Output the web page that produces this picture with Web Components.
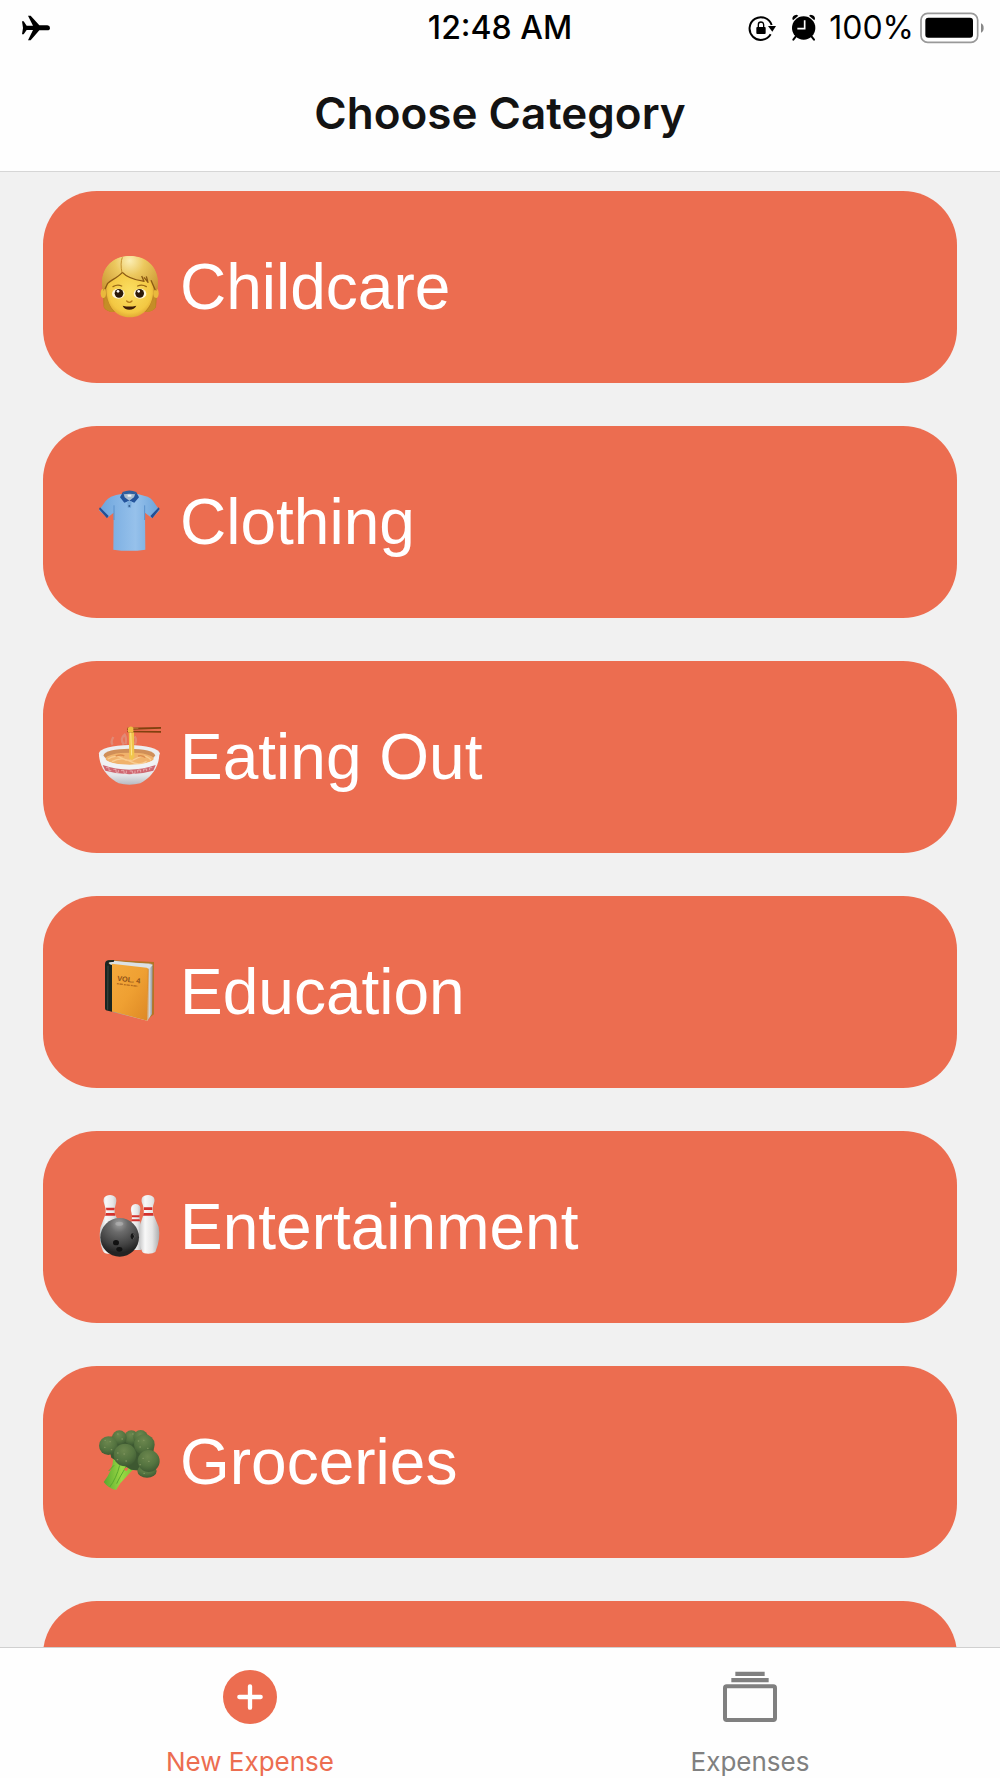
<!DOCTYPE html>
<html lang="en">
<head>
<meta charset="utf-8">
<meta name="viewport" content="width=device-width, initial-scale=1">
<title>Choose Category</title>
<style>
  :root {
    --accent: #ec6d50;
    --page: #f1f1f1;
    --bar: #fefefe;
    --ui-font: Inter, Roboto, sans-serif;
    --card-font: "Liberation Sans", Arial, sans-serif;
  }
  body {
    margin: 0;
    background: var(--page);
    font-family: var(--ui-font);
  }
</style>
</head>
<body>

<expense-app>
  <status-bar slot="top" time="12:48 AM" battery="100%"></status-bar>
  <nav-header slot="top">Choose Category</nav-header>

  <category-card icon="child">Childcare</category-card>
  <category-card icon="shirt">Clothing</category-card>
  <category-card icon="noodles">Eating Out</category-card>
  <category-card icon="book">Education</category-card>
  <category-card icon="bowling">Entertainment</category-card>
  <category-card icon="broccoli">Groceries</category-card>
  <category-card></category-card>

  <tab-bar slot="bottom">
    <tab-item icon="add" href="#new" active>New Expense</tab-item>
    <tab-item icon="stack" href="#expenses">Expenses</tab-item>
  </tab-bar>
</expense-app>

<script>
const categoryIcons = {
  child: `
    <svg viewBox="51 75 192 192" aria-hidden="true">
      <defs>
        <radialGradient id="hair" gradientUnits="userSpaceOnUse" cx="149" cy="92" r="150">
          <stop offset="0" stop-color="#fbeeb4"/><stop offset=".3" stop-color="#ecc85e"/><stop offset="1" stop-color="#b97c1c"/>
        </radialGradient>
        <radialGradient id="face" cx=".5" cy=".45" r=".6">
          <stop offset="0" stop-color="#fbdf62"/><stop offset=".75" stop-color="#f3c843"/><stop offset="1" stop-color="#d99d2c"/>
        </radialGradient>
      </defs>
      <path d="M149 78C103 78 67 108 66 158L71 232Q80 248 104 245L194 245Q218 247 228 232L234 160C234 108 198 78 149 78Z" fill="url(#hair)"/>
      <ellipse cx="70" cy="190" rx="8" ry="14" fill="#e9b93c"/>
      <ellipse cx="228" cy="190" rx="8" ry="14" fill="#e9b93c"/>
      <path d="M80 168C82 140 110 120 149 120S216 140 220 170C222 226 192 262 149 262S76 226 80 168Z" fill="url(#face)"/>
      <path d="M66 160C68 106 104 79 149 79S232 108 234 160L230 184C224 176 220 163 216 153L202 151L192 142L192 154C174 151 145 147 127 127C112 144 91 151 83 160C77 169 74 178 70 184Z" fill="url(#hair)"/>
      <path d="M74 202L83 212Q90 232 102 246Q82 247 72 232ZM226 202L216 212Q210 232 197 246Q218 247 227 232Z" fill="#c58d27"/>
      <path d="M127 127C112 144 91 151 83 160L75 177M127 127C145 147 174 151 192 154L185 138M192 142L204 157L199 139M213 151L226 181" fill="none" stroke="#8b5a14" stroke-width="4" stroke-linejoin="round"/>
      <path d="M127 82Q120 100 126 128" fill="none" stroke="#c2902e" stroke-width="3"/>
      <path d="M99 170Q112 162 125 168M173 168Q186 162 199 170" fill="none" stroke="#9c6a17" stroke-width="4" stroke-linecap="round"/>
      <ellipse cx="115" cy="191" rx="19" ry="15" fill="#fff7d9"/>
      <ellipse cx="180" cy="191" rx="19" ry="15" fill="#fff7d9"/>
      <circle cx="117" cy="190" r="13" fill="#2c1a0a"/><circle cx="179" cy="190" r="13" fill="#2c1a0a"/>
      <circle cx="114" cy="184" r="4" fill="#fff"/><circle cx="176" cy="184" r="4" fill="#fff"/>
      <path d="M140 213Q148 221 156 213" fill="none" stroke="#b57b19" stroke-width="4" stroke-linecap="round"/>
      <path d="M128 227Q148 232 169 227Q163 239 148 239T128 227Z" fill="#3e1c08"/>
    </svg>`,
  shirt: `
    <svg viewBox="51 60 192 192" aria-hidden="true">
      <defs>
        <linearGradient id="cloth">
          <stop offset="0" stop-color="#6aa3da"/><stop offset=".25" stop-color="#7fb1e3"/><stop offset=".6" stop-color="#96c1eb"/><stop offset="1" stop-color="#6aa3da"/>
        </linearGradient>
      </defs>
      <path d="M124 72Q108 74 93 80Q83 85 77 93L57 121L82 143L101 128L100 239Q148 246 196 239L195 128L216 145L239 121L219 93Q213 84 203 80L173 72Z" fill="url(#cloth)"/>
      <path d="M57 117L60 112L86 138L81 145ZM239 117L236 112L211 138L217 145Z" fill="#244f94"/>
      <path d="M102 106V150M194 106V150" stroke="#5a91cc" stroke-width="3"/>
      <path d="M129 68Q148 60 168 68L164 83L148 94L133 83Z" fill="#a9bccf"/>
      <path d="M143 74H154V80H143Z" fill="#eef3f6"/>
      <path d="M129 65L120 82L133 98L148 92L134 82ZM168 65L177 82L163 98L148 92L162 82Z" fill="#24549c"/>
      <path d="M128 66Q148 57 169 66L166 73Q148 69 131 73Z" fill="#2f5f9f"/>
      <path d="M142 94H155L153 114H143Z" fill="#78aadb"/>
      <circle cx="148" cy="108" r="3" fill="#365f92"/>
    </svg>`,
  noodles: `
    <svg viewBox="51 60 192 192" aria-hidden="true">
      <defs>
        <linearGradient id="bowl" x2="0" y2="1">
          <stop offset="0" stop-color="#f7f8f9"/><stop offset=".7" stop-color="#e5e6e9"/><stop offset="1" stop-color="#b8bac1"/>
        </linearGradient>
      </defs>
      <path d="M98 119Q91 111 100 96M131 119Q119 101 134 89Q140 99 137 117M164 117Q172 106 164 94" fill="none" stroke="#d8aaa0" stroke-width="7" opacity=".45"/>
      <path d="M57 143C57 184 78 214 116 235Q148 243 181 235C218 214 238 184 238 143Z" fill="url(#bowl)"/>
      <ellipse cx="148" cy="145" rx="91" ry="25" fill="#eceef0"/>
      <ellipse cx="148" cy="151" rx="77" ry="20" fill="#d08f58"/>
      <ellipse cx="149" cy="161" rx="72" ry="18" fill="#f0b26c"/>
      <path d="M84 162Q105 147 127 160T172 159T213 165M96 170Q124 154 151 169T200 169" fill="none" stroke="#f9cd92" stroke-width="4"/>
      <path d="M107 153Q124 147 133 153M174 153Q189 150 196 158" fill="none" stroke="#dd8c4c" stroke-width="4"/>
      <path d="M57 145C61 166 98 180 148 180S235 166 238 145C236 184 205 193 148 193S60 182 57 145Z" fill="#f1f2f4"/>
      <path d="M68 180Q148 208 227 180L220 197Q148 218 76 197Z" fill="#cf6670"/>
      <path d="M78 188H87V197H94M100 193H108V202H115V195M123 197H132V205H139V197M149 198H157V205H165V197M173 202V195H182V202M191 199V192H200V198M209 195V188H217" fill="none" stroke="#f0c6c5" stroke-width="2"/>
      <path d="M149 75L151 161M154 75L156 164M159 77L160 158" stroke="#f0c54c" stroke-width="6" fill="none"/>
      <path d="M152 79L155 151" stroke="#ffe58c" stroke-width="3"/>
      <path d="M142 68L244 66V71L142 75ZM142 77L244 78V83L142 82Z" fill="#80410f"/>
      <path d="M142 68H175V71H142Z" fill="#bd8138"/>
      <path d="M144 69Q151 60 160 68L160 82H144Z" fill="#eebd42"/>
    </svg>`,
  book: `
    <svg viewBox="51 60 192 192" aria-hidden="true">
      <defs>
        <linearGradient id="cover" x2="1" y2="1">
          <stop offset="0" stop-color="#f4aa3d"/><stop offset=".5" stop-color="#efa032"/><stop offset="1" stop-color="#dd8824"/>
        </linearGradient>
        <linearGradient id="pages">
          <stop offset="0" stop-color="#8e989d"/><stop offset=".9" stop-color="#e0e6e9"/><stop offset="1" stop-color="#8c8f93"/>
        </linearGradient>
      </defs>
      <path d="M84 62Q90 58 98 60L222 66V223L204 237L84 212Z" fill="#b47424"/>
      <path d="M95 64L214 71Q219 75 218 84L216 222L202 242L98 216Z" fill="url(#pages)"/>
      <path d="M84 64L101 62L219 74L207 87L91 75Z" fill="#dbe1e4"/>
      <path d="M95 71L200 83Q205 84 205 90L202 242L95 214Z" fill="url(#cover)"/>
      <path d="M84 61Q75 63 75 73V205Q75 212 84 212L96 215V75Q86 73 85 69Q88 65 101 66L103 60Z" fill="#182521"/>
      <path d="M84 77L83 209" stroke="#3c4841" stroke-width="3"/>
      <path d="M205 86L204 239" stroke="#c57920" stroke-width="2"/>
      <g transform="rotate(7 143 122)">
        <text x="111" y="126" font-family="Liberation Sans, sans-serif" font-size="22" font-weight="700" fill="#8e5118">VOL. 4</text>
        <path d="M112 135H176" stroke="#b46c20" stroke-width="4" stroke-dasharray="6 2 10 3"/>
      </g>
    </svg>`,
  bowling: `
    <svg viewBox="51 60 192 192" aria-hidden="true">
      <defs>
        <linearGradient id="pin">
          <stop offset="0" stop-color="#c2c2c3"/><stop offset=".3" stop-color="#f8f8f8"/><stop offset=".65" stop-color="#e5e5e5"/><stop offset="1" stop-color="#acacad"/>
        </linearGradient>
        <radialGradient id="ball" cx=".48" cy=".15" r=".75">
          <stop offset="0" stop-color="#a0a0a0"/><stop offset=".3" stop-color="#6b6b6b"/><stop offset=".75" stop-color="#414141"/><stop offset="1" stop-color="#232323"/>
        </radialGradient>
      </defs>
      <path d="M167 87C155 87 150 99 154 112Q158 122 155 138L143 180Q143 211 154 225H184Q192 180 180 138Q176 122 180 109C184 96 178 87 167 87Z" fill="url(#pin)"/>
      <path d="M156 121H179L178 127H156ZM155 133H179L180 139H154Z" fill="#d3312c"/>
      <path d="M90 60C74 60 68 71 72 84Q79 102 77 116L61 158Q55 194 69 229Q72 236 82 236H105L120 148L104 116Q102 103 108 84C112 71 106 60 90 60Z" fill="url(#pin)"/>
      <path d="M78 98H104L103 106H79ZM78 114H104L106 122H75Z" fill="#d3312c"/>
      <path d="M204 60C187 60 182 71 186 84Q193 98 191 117L178 156Q173 204 187 231Q191 236 205 236T226 231Q243 191 236 156L220 117Q216 99 222 84C227 71 220 60 204 60Z" fill="url(#pin)"/>
      <path d="M192 97H217V105H192ZM191 114H219L221 122H189Z" fill="#d3312c"/>
      <circle cx="119" cy="187" r="58" fill="url(#ball)"/>
      <ellipse cx="118" cy="146" rx="12" ry="6" fill="#bbb" opacity=".5"/>
      <ellipse cx="108" cy="203" rx="9" ry="8" fill="#111"/>
      <ellipse cx="118" cy="223" rx="9" ry="7" fill="#111"/>
      <ellipse cx="158" cy="184" rx="6" ry="9" fill="#171717"/>
      <path d="M160 176Q168 184 160 192" fill="none" stroke="#777" stroke-width="2"/>
    </svg>`,
  broccoli: `
    <svg viewBox="51 60 192 192" aria-hidden="true">
      <defs>
        <linearGradient id="stem">
          <stop offset="0" stop-color="#58a72f"/><stop offset=".5" stop-color="#9bd944"/><stop offset="1" stop-color="#68b62b"/>
        </linearGradient>
        <radialGradient id="floret" cx=".45" cy=".3" r=".7">
          <stop offset="0" stop-color="#6c874e"/><stop offset=".6" stop-color="#557440"/><stop offset="1" stop-color="#3f5b33"/>
        </radialGradient>
      </defs>
      <path d="M100 143Q99 180 71 216Q86 236 108 240L121 220L157 181L179 177L148 157Z" fill="url(#stem)"/>
      <path d="M119 166Q109 205 89 231M140 168Q119 201 110 221M86 183L102 166" fill="none" stroke="#5aa92e" stroke-width="3"/>
      <path d="M131 177L149 168L139 184Z" fill="var(--accent)"/>
      <path d="M79 82L180 70L221 119L211 185L153 179L94 143Z" fill="#3d5831"/>
      <g fill="url(#floret)">
        <circle cx="154" cy="83" r="22"/>
        <circle cx="182" cy="82" r="22"/>
        <circle cx="118" cy="83" r="22"/>
        <circle cx="85" cy="107" r="28"/>
        <circle cx="193" cy="104" r="31"/>
        <ellipse cx="201" cy="183" rx="29" ry="20"/>
        <circle cx="206" cy="153" r="33"/>
        <circle cx="135" cy="135" r="34"/>
      </g>
      <path d="M75 91h1m14 4h1m-17 17h1m19 7h1m18-47h1m12 15h1m31-15h1m16 21h1m15-2h1m-12 20h1m22 4h1m-91 14h1m18 3h1m-21 17h1m25 4h1m50-8h1m16 9h1m-27 10h1m11 26h1" fill="none" stroke="#80965f" stroke-width="4" stroke-linecap="round"/>
    </svg>`
};

const tabIcons = {
  add: `
    <svg viewBox="275 240 162 162" aria-hidden="true">
      <circle cx="356" cy="321" r="81" fill="currentColor"/>
      <path d="M356 289V353M324 321H388" stroke="#fff" stroke-width="13" stroke-linecap="round"/>
    </svg>`,
  stack: `
    <svg viewBox="221 120 162 162" aria-hidden="true">
      <path d="M258 125H346V138H258ZM246 144H358V157H246Z" fill="currentColor"/>
      <rect x="227" y="169" width="150" height="101" rx="5" fill="none" stroke="currentColor" stroke-width="12"/>
    </svg>`
};

class ExpenseApp extends HTMLElement {
  constructor() {
    super();
    this.attachShadow({ mode: 'open' });
    this.shadowRoot.innerHTML = `
      <style>
        :host {
          display: flex;
          flex-direction: column;
          height: 100vh;
        }
        header, footer {
          flex: none;
          background: var(--bar);
        }
        header {
          border-bottom: 1px solid #d6d6d6;
        }
        footer {
          border-top: 1px solid #d0d0d0;
        }
        main {
          flex: 1;
          min-height: 0;
          display: flex;
          flex-direction: column;
          gap: 43px;
          padding: 19px 43px;
          overflow-y: auto;
          scrollbar-width: none;
        }
      </style>
      <header><slot name="top"></slot></header>
      <main><slot></slot></main>
      <footer><slot name="bottom"></slot></footer>
    `;
  }
}
customElements.define('expense-app', ExpenseApp);

class StatusBar extends HTMLElement {
  constructor() {
    super();
    this.attachShadow({ mode: 'open' });
    this.shadowRoot.innerHTML = `
      <style>
        :host {
          display: grid;
          grid-template-columns: 1fr auto 1fr;
          align-items: center;
          padding: 0 16px;
          height: 55px;
          font-size: 32px;
          line-height: 40px;
          color: #000;
        }
        svg {
          display: block;
          flex: none;
        }
        .plane { margin-left: 5px; }
        .time {
          font-weight: 500;
        }
        .right {
          display: flex;
          align-items: center;
          justify-content: flex-end;
        }
        .lock { margin-right: 15px; }
        .alarm { margin-right: 12px; }
        .battery { margin-left: 6px; }
      </style>
      <svg class="plane" width="30" height="28" viewBox="62 40 90 84" role="img" aria-label="Airplane mode">
        <path d="M65 62H70L79 75H98L83 45H91L117 74H141Q149 75 149 82T141 89H117L91 119H83L98 88H79L70 101H65L68 82Z"/>
      </svg>
      <span class="time"></span>
      <div class="right">
        <svg class="lock" width="28" height="28" viewBox="57 40 84 84" role="img" aria-label="Rotation lock">
          <path d="M125 101A34 34 0 1 1 128 73" fill="none" stroke="#000" stroke-width="6"/>
          <path d="M117 76H141L130 93Z"/>
          <rect x="82" y="79" width="28" height="21" rx="3"/>
          <path d="M88 80V72Q88 64 96 64T104 72V80" fill="none" stroke="#000" stroke-width="4"/>
        </svg>
        <svg class="alarm" width="26" height="28" viewBox="187 38 78 84" role="img" aria-label="Alarm">
          <circle cx="225" cy="80" r="35"/>
          <path d="M191 52Q191 41 204 40L209 43L193 57ZM259 52Q259 41 246 40L241 43L257 57Z"/>
          <path d="M201 106L194 115M249 106L256 115" stroke="#000" stroke-width="6" stroke-linecap="round"/>
          <path d="M228 57V82H206" fill="none" stroke="#fff" stroke-width="5"/>
        </svg>
        <span class="level"></span>
        <svg class="battery" width="64" height="32" viewBox="574 31 192 96" aria-hidden="true">
          <rect x="577" y="35" width="170" height="87" rx="20" fill="none" stroke="#999" stroke-width="5"/>
          <rect x="590" y="48" width="143" height="60" rx="9"/>
          <path d="M757 65Q765 68 765 79T757 93Z" fill="#888"/>
        </svg>
      </div>
    `;
  }
  connectedCallback() {
    this.shadowRoot.querySelector('.time').textContent = this.getAttribute('time');
    this.shadowRoot.querySelector('.level').textContent = this.getAttribute('battery');
  }
}
customElements.define('status-bar', StatusBar);

class NavHeader extends HTMLElement {
  constructor() {
    super();
    this.attachShadow({ mode: 'open' });
    this.shadowRoot.innerHTML = `
      <style>
        :host {
          display: block;
          padding: 30px 20px;
        }
        h1 {
          margin: 0;
          font-size: 44px;
          line-height: 56px;
          font-weight: 600;
          text-align: center;
          color: #131313;
        }
      </style>
      <h1><slot></slot></h1>
    `;
  }
}
customElements.define('nav-header', NavHeader);

class CategoryCard extends HTMLElement {
  constructor() {
    super();
    this.attachShadow({ mode: 'open' });
    this.shadowRoot.innerHTML = `
      <style>
        :host {
          display: block;
          flex: none;
        }
        button {
          display: flex;
          align-items: center;
          gap: 19px;
          width: 100%;
          min-height: 192px;
          padding: 64px 54px;
          border: 0;
          border-radius: 54px;
          background: var(--accent);
          color: #fff;
          font-family: var(--card-font);
          font-size: 64px;
          line-height: 64px;
          text-align: left;
          cursor: pointer;
        }
        .icon {
          flex: none;
          width: 64px;
          height: 64px;
        }
        svg {
          display: block;
          width: 100%;
          height: 100%;
        }
      </style>
      <button type="button">
        <span class="icon"></span>
        <span><slot></slot></span>
      </button>
    `;
  }
  connectedCallback() {
    const icon = categoryIcons[this.getAttribute('icon')];
    this.shadowRoot.querySelector('.icon').innerHTML = icon || '';
  }
}
customElements.define('category-card', CategoryCard);

class TabBar extends HTMLElement {
  constructor() {
    super();
    this.attachShadow({ mode: 'open' });
    this.shadowRoot.innerHTML = `
      <style>
        :host {
          display: block;
        }
        nav {
          display: grid;
          grid-template-columns: 1fr 1fr;
        }
      </style>
      <nav><slot></slot></nav>
    `;
  }
}
customElements.define('tab-bar', TabBar);

class TabItem extends HTMLElement {
  constructor() {
    super();
    this.attachShadow({ mode: 'open' });
    this.shadowRoot.innerHTML = `
      <style>
        :host {
          display: block;
          color: #808080;
        }
        :host([active]) {
          color: var(--accent);
        }
        a {
          display: flex;
          flex-direction: column;
          align-items: center;
          gap: 22px;
          padding-top: 22px;
          color: inherit;
          font-size: 26px;
          line-height: 32px;
          text-decoration: none;
        }
        svg {
          display: block;
          width: 54px;
          height: 54px;
        }
      </style>
      <a>
        <span class="icon"></span>
        <span><slot></slot></span>
      </a>
    `;
  }
  connectedCallback() {
    this.shadowRoot.querySelector('a').href = this.getAttribute('href');
    this.shadowRoot.querySelector('.icon').innerHTML = tabIcons[this.getAttribute('icon')];
  }
}
customElements.define('tab-item', TabItem);
</script>
</body>
</html>
